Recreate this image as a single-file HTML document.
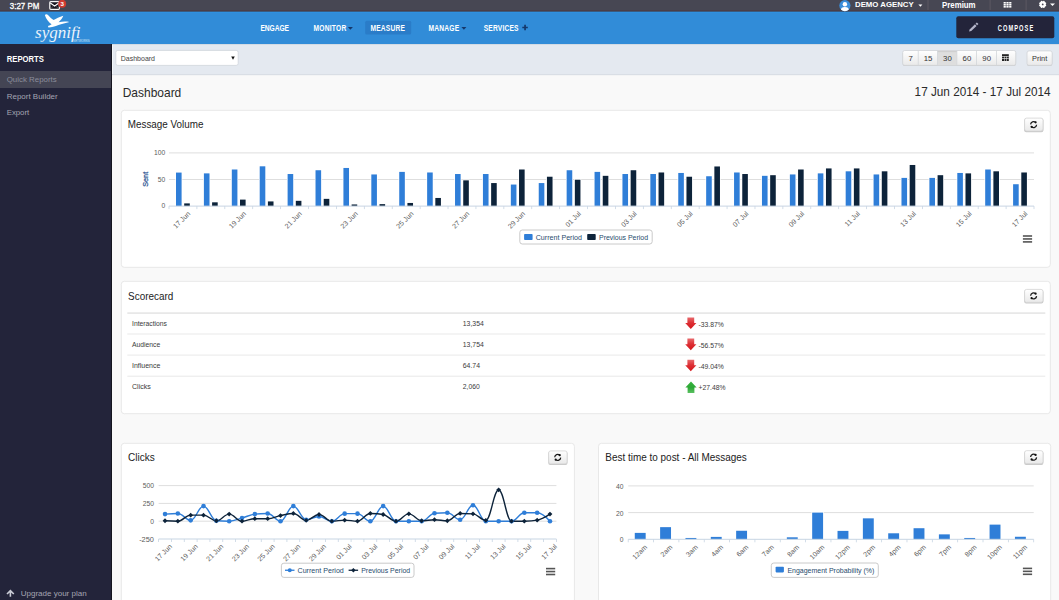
<!DOCTYPE html>
<html><head><meta charset="utf-8"><title>Dashboard</title>
<style>html,body{margin:0;padding:0;width:1059px;height:600px;overflow:hidden;background:#f9f9f9}
svg{display:block;font-family:"Liberation Sans", sans-serif}</style></head>
<body><svg width="1059" height="600" viewBox="0 0 1059 600">
<rect x="0" y="0" width="1059" height="600" fill="#f9f9f9"/>
<rect x="0" y="0" width="1059" height="11" fill="#474753"/>
<rect x="0" y="11" width="1059" height="33" fill="#318cd8"/>
<rect x="0" y="10" width="1059" height="1" fill="#4a3e47"/>
<rect x="0" y="11" width="1059" height="1" fill="#3b5a7e"/>
<rect x="0" y="12" width="1059" height="1" fill="#2f90e0"/>
<rect x="0" y="44" width="112" height="556" fill="#23243a"/>
<rect x="111" y="44" width="1" height="556" fill="#15151f"/>
<rect x="112" y="44" width="947" height="31" fill="#e4e9f0"/>
<rect x="112" y="44" width="947" height="1" fill="#d3dbe4"/>
<rect x="112" y="74" width="947" height="1.2" fill="#d9dee5"/>
<rect x="112" y="45" width="1" height="29" fill="#f3f6f9"/>
<text x="9.8" y="8.6" font-size="8.6" fill="#fff" font-weight="normal" text-anchor="start" textLength="29.5" lengthAdjust="spacingAndGlyphs" stroke="#fff" stroke-width="0.3">3:27 PM</text>
<rect x="49.8" y="1.7" width="9.6" height="7.6" rx="1" fill="#15151e" stroke="#f4f4f4" stroke-width="1.3"/>
<path d="M50.3 3.0 L54.6 6.0 L58.9 3.0" fill="none" stroke="#fff" stroke-width="1.1"/>
<path d="M50.6 8.6 L53.2 6.4 M58.6 8.6 L56.0 6.4" fill="none" stroke="#777" stroke-width="0.6"/>
<circle cx="62.2" cy="3.8" r="4.0" fill="#d03a30"/>
<text x="62.2" y="6.0" font-size="6.2" fill="#fff" font-weight="bold" text-anchor="middle" >3</text>
<defs><clipPath id="av"><circle cx="844.9" cy="5.6" r="5.6"/></clipPath></defs>
<circle cx="844.9" cy="5.6" r="5.6" fill="#3a8edb"/>
<g clip-path="url(#av)"><circle cx="844.9" cy="4.2" r="2.2" fill="#fff"/><ellipse cx="844.9" cy="10.2" rx="4" ry="3.2" fill="#fff"/></g>
<text x="855" y="7.2" font-size="7.4" fill="#fff" font-weight="bold" text-anchor="start" textLength="58.6" lengthAdjust="spacingAndGlyphs" >DEMO AGENCY</text>
<path d="M918.4 4.6 L922.4 4.6 L920.4 6.8 Z" fill="#fff"/>
<rect x="927.5" y="0" width="1" height="10" fill="#5c5862"/>
<rect x="989.6" y="0" width="1" height="10" fill="#5c5862"/>
<rect x="1025.6" y="0" width="1" height="10" fill="#5c5862"/>
<text x="942" y="7.7" font-size="8.4" fill="#fff" font-weight="bold" text-anchor="start" textLength="33.6" lengthAdjust="spacingAndGlyphs" >Premium</text>
<rect x="1003.6" y="2.0" width="2.2" height="1.6" fill="#fff"/>
<rect x="1003.6" y="4.0" width="2.2" height="1.6" fill="#fff"/>
<rect x="1003.6" y="6.0" width="2.2" height="1.6" fill="#fff"/>
<rect x="1006.4" y="2.0" width="2.2" height="1.6" fill="#fff"/>
<rect x="1006.4" y="4.0" width="2.2" height="1.6" fill="#fff"/>
<rect x="1006.4" y="6.0" width="2.2" height="1.6" fill="#fff"/>
<rect x="1009.2" y="2.0" width="2.2" height="1.6" fill="#fff"/>
<rect x="1009.2" y="4.0" width="2.2" height="1.6" fill="#fff"/>
<rect x="1009.2" y="6.0" width="2.2" height="1.6" fill="#fff"/>
<circle cx="1045.47" cy="5.55" r="0.8" fill="#fff"/>
<circle cx="1043.85" cy="7.17" r="0.8" fill="#fff"/>
<circle cx="1041.55" cy="7.17" r="0.8" fill="#fff"/>
<circle cx="1039.93" cy="5.55" r="0.8" fill="#fff"/>
<circle cx="1039.93" cy="3.25" r="0.8" fill="#fff"/>
<circle cx="1041.55" cy="1.63" r="0.8" fill="#fff"/>
<circle cx="1043.85" cy="1.63" r="0.8" fill="#fff"/>
<circle cx="1045.47" cy="3.25" r="0.8" fill="#fff"/>
<circle cx="1042.7" cy="4.4" r="3.15" fill="#fff"/><circle cx="1042.7" cy="4.4" r="0.9" fill="#474753"/>
<path d="M1050.0 3.4 L1055.0 3.4 L1052.5 5.9 Z" fill="#fff"/>
<path d="M44.9 15.2 C45.5 13.8 47 14 48.5 15.5 C50 17 51.5 19 53.6 20.0 C56 18.8 59.5 17 63.3 15.8 C62.5 18 60.5 20.5 58.6 22.2 C62 21.6 66 21.3 69.4 22.1 C66 23.4 61.5 24 58.5 25.0 C55 26.2 51.5 27.4 48.4 27.6 L48.0 26.0 C49.5 25.5 50.8 24.8 51.6 24.2 C49 22.5 46 19 44.9 15.2 Z" fill="#fff"/>
<text x="35.0" y="37.5" font-family="'Liberation Serif', serif" font-style="italic" font-size="17.4" fill="#fff" stroke="#318cd8" stroke-width="0.15" textLength="45.6" lengthAdjust="spacingAndGlyphs">sygnifi</text>
<text x="73.1" y="41.5" font-size="2.7" fill="#d6e7f7" font-weight="normal" text-anchor="start" textLength="16.7" lengthAdjust="spacingAndGlyphs" >NETWORKS</text>
<rect x="365.2" y="20.8" width="46" height="13.6" rx="1.5" fill="#2a7cc8"/>
<text x="0" y="0" transform="translate(260.4 30.8) scale(0.68 1)" font-size="9.8" fill="#fff" font-weight="bold" textLength="42.06" lengthAdjust="spacing">ENGAGE</text>
<text x="0" y="0" transform="translate(313.4 30.8) scale(0.68 1)" font-size="9.8" fill="#fff" font-weight="bold" textLength="48.38" lengthAdjust="spacing">MONITOR</text>
<text x="0" y="0" transform="translate(370.4 30.8) scale(0.68 1)" font-size="9.8" fill="#fff" font-weight="bold" textLength="50.88" lengthAdjust="spacing">MEASURE</text>
<text x="0" y="0" transform="translate(428.6 30.8) scale(0.68 1)" font-size="9.8" fill="#fff" font-weight="bold" textLength="44.85" lengthAdjust="spacing">MANAGE</text>
<text x="0" y="0" transform="translate(483.7 30.8) scale(0.68 1)" font-size="9.8" fill="#fff" font-weight="bold" textLength="51.18" lengthAdjust="spacing">SERVICES</text>
<path d="M347.9 26.9 L352.9 26.9 L350.4 29.8 Z" fill="#15386b"/>
<path d="M461.4 26.9 L466.4 26.9 L463.9 29.8 Z" fill="#15386b"/>
<path d="M522.3 27.5 H527.8 M525.05 24.8 V30.2" stroke="#15386b" stroke-width="1.7"/>
<rect x="956.3" y="16.2" width="98" height="22" rx="2" fill="#23243a"/>
<path d="M969.00 31.60 L969.64 29.38 L974.97 24.25 L976.57 25.90 L971.24 31.04 Z" fill="#b4b5c9"/>
<path d="M975.55 23.69 L976.84 22.44 L978.44 24.10 L977.14 25.35 Z" fill="#b4b5c9"/>
<text x="0" y="0" transform="translate(997.7 31.0) scale(0.66 1)" font-size="8.6" fill="#fff" font-weight="bold" textLength="53.9" lengthAdjust="spacing">COMPOSE</text>
<rect x="0" y="71" width="111" height="17" fill="#444554"/>
<text x="6.7" y="62.2" font-size="8.6" fill="#fff" font-weight="bold" text-anchor="start" textLength="37.2" lengthAdjust="spacingAndGlyphs" >REPORTS</text>
<text x="6.7" y="82.0" font-size="8" fill="#8b8d9b" font-weight="normal" text-anchor="start" textLength="50" lengthAdjust="spacingAndGlyphs" >Quick Reports</text>
<text x="6.7" y="98.6" font-size="8" fill="#a3a5b2" font-weight="normal" text-anchor="start" textLength="51" lengthAdjust="spacingAndGlyphs" >Report Builder</text>
<text x="6.7" y="115.2" font-size="8" fill="#a3a5b2" font-weight="normal" text-anchor="start" textLength="22.5" lengthAdjust="spacingAndGlyphs" >Export</text>
<path d="M10.4 596.8 V591 M7 594 L10.4 590.6 L13.8 594" fill="none" stroke="#c9cbd5" stroke-width="1.6"/>
<text x="20.7" y="596.4" font-size="8" fill="#a3a5b2" font-weight="normal" text-anchor="start" textLength="66" lengthAdjust="spacingAndGlyphs" >Upgrade your plan</text>
<rect x="115.8" y="50.4" width="122.4" height="15" rx="2" fill="#fff" stroke="#cfd4da" stroke-width="0.8"/>
<text x="120.8" y="61.0" font-size="7.2" fill="#444" font-weight="normal" text-anchor="start" textLength="34.2" lengthAdjust="spacingAndGlyphs" >Dashboard</text>
<path d="M231.2 56.4 L234.8 56.4 L233 59.8 Z" fill="#111"/>
<defs><linearGradient id="bg" x1="0" y1="0" x2="0" y2="1"><stop offset="0" stop-color="#ffffff"/><stop offset="1" stop-color="#e9e9e9"/></linearGradient></defs>
<rect x="902.7" y="51.2" width="113.1" height="14.9" rx="2" fill="#c4c4c4"/>
<rect x="902.7" y="50.5" width="113.1" height="14.9" rx="2" fill="url(#bg)" stroke="#d0d3d7" stroke-width="0.8"/>
<rect x="937.6" y="50.9" width="19.3" height="14.2" fill="#dedede"/>
<rect x="937.6" y="50.9" width="19.3" height="1.2" fill="#cfcfcf"/>
<rect x="917.8000000000001" y="50.5" width="0.8" height="14.9" fill="#d3d6da"/>
<rect x="937.2" y="50.5" width="0.8" height="14.9" fill="#d3d6da"/>
<rect x="956.5" y="50.5" width="0.8" height="14.9" fill="#d3d6da"/>
<rect x="976.2" y="50.5" width="0.8" height="14.9" fill="#d3d6da"/>
<rect x="996.0" y="50.5" width="0.8" height="14.9" fill="#d3d6da"/>
<text x="910.6500000000001" y="60.8" font-size="7.8" fill="#333" font-weight="normal" text-anchor="middle" >7</text>
<text x="928.1000000000001" y="60.8" font-size="7.8" fill="#333" font-weight="normal" text-anchor="middle" >15</text>
<text x="947.45" y="60.8" font-size="7.8" fill="#333" font-weight="normal" text-anchor="middle" >30</text>
<text x="966.95" y="60.8" font-size="7.8" fill="#333" font-weight="normal" text-anchor="middle" >60</text>
<text x="986.7" y="60.8" font-size="7.8" fill="#333" font-weight="normal" text-anchor="middle" >90</text>
<rect x="1002" y="54.2" width="6.8" height="6.8" fill="#222"/>
<rect x="1002" y="56.2" width="6.8" height="0.6" fill="#f3f3f3"/><rect x="1002" y="58.4" width="6.8" height="0.6" fill="#f3f3f3"/>
<rect x="1004.2" y="56.2" width="0.5" height="4.8" fill="#f3f3f3"/><rect x="1006.3" y="56.2" width="0.5" height="4.8" fill="#f3f3f3"/>
<rect x="1027" y="51.6" width="25.2" height="14.5" rx="2" fill="#c4c4c4"/>
<rect x="1027" y="50.9" width="25.2" height="14.5" rx="2" fill="url(#bg)" stroke="#d0d3d7" stroke-width="0.8"/>
<text x="1039.6" y="60.8" font-size="7.6" fill="#333" font-weight="normal" text-anchor="middle" textLength="15.2" lengthAdjust="spacingAndGlyphs" >Print</text>
<text x="122.7" y="97.0" font-size="13.6" fill="#2a2a2a" font-weight="normal" text-anchor="start" textLength="58.6" lengthAdjust="spacingAndGlyphs" >Dashboard</text>
<text x="1050.6" y="95.6" font-size="13.2" fill="#2a2a2a" font-weight="normal" text-anchor="end" textLength="136" lengthAdjust="spacingAndGlyphs" >17 Jun 2014 - 17 Jul 2014</text>
<rect x="121.3" y="110.3" width="929" height="157" rx="3" fill="#fff" stroke="#e8e8e8" stroke-width="1"/>
<rect x="121.3" y="281.3" width="929" height="132.4" rx="3" fill="#fff" stroke="#e8e8e8" stroke-width="1"/>
<rect x="121.3" y="443.3" width="453.1" height="169" rx="3" fill="#fff" stroke="#e8e8e8" stroke-width="1"/>
<rect x="598.5" y="443.3" width="452.2" height="169" rx="3" fill="#fff" stroke="#e8e8e8" stroke-width="1"/>
<text x="127.8" y="128.4" font-size="10.8" fill="#222" font-weight="normal" text-anchor="start" textLength="75.6" lengthAdjust="spacingAndGlyphs" >Message Volume</text>
<text x="128.1" y="300.1" font-size="10.8" fill="#222" font-weight="normal" text-anchor="start" textLength="45.2" lengthAdjust="spacingAndGlyphs" >Scorecard</text>
<text x="128" y="460.8" font-size="10.8" fill="#222" font-weight="normal" text-anchor="start" textLength="26.7" lengthAdjust="spacingAndGlyphs" >Clicks</text>
<text x="605.3" y="461.2" font-size="10.8" fill="#222" font-weight="normal" text-anchor="start" textLength="141.5" lengthAdjust="spacingAndGlyphs" >Best time to post - All Messages</text>
<rect x="1024.2" y="118.60000000000001" width="19.2" height="13.7" rx="2" fill="#c9c9c9"/>
<rect x="1024.6000000000001" y="118.10000000000001" width="18.4" height="13.0" rx="2" fill="url(#bg)" stroke="#d3d3d3" stroke-width="0.8"/>
<path d="M1030.61 124.39 A3.0 3.0 0 0 1 1035.61 122.37" fill="none" stroke="#1a1a1a" stroke-width="1.25"/>
<circle cx="1035.61" cy="122.37" r="1.1" fill="#111"/>
<path d="M1036.59 124.81 A3.0 3.0 0 0 1 1031.59 126.83" fill="none" stroke="#1a1a1a" stroke-width="1.25"/>
<circle cx="1031.59" cy="126.83" r="1.1" fill="#111"/>
<rect x="1024.2" y="289.9" width="19.2" height="13.7" rx="2" fill="#c9c9c9"/>
<rect x="1024.6000000000001" y="289.4" width="18.4" height="13.0" rx="2" fill="url(#bg)" stroke="#d3d3d3" stroke-width="0.8"/>
<path d="M1030.61 295.69 A3.0 3.0 0 0 1 1035.61 293.67" fill="none" stroke="#1a1a1a" stroke-width="1.25"/>
<circle cx="1035.61" cy="293.67" r="1.1" fill="#111"/>
<path d="M1036.59 296.11 A3.0 3.0 0 0 1 1031.59 298.13" fill="none" stroke="#1a1a1a" stroke-width="1.25"/>
<circle cx="1031.59" cy="298.13" r="1.1" fill="#111"/>
<rect x="548.3" y="451.4" width="19.2" height="13.7" rx="2" fill="#c9c9c9"/>
<rect x="548.6999999999999" y="450.9" width="18.4" height="13.0" rx="2" fill="url(#bg)" stroke="#d3d3d3" stroke-width="0.8"/>
<path d="M554.71 457.19 A3.0 3.0 0 0 1 559.71 455.17" fill="none" stroke="#1a1a1a" stroke-width="1.25"/>
<circle cx="559.71" cy="455.17" r="1.1" fill="#111"/>
<path d="M560.69 457.61 A3.0 3.0 0 0 1 555.69 459.63" fill="none" stroke="#1a1a1a" stroke-width="1.25"/>
<circle cx="555.69" cy="459.63" r="1.1" fill="#111"/>
<rect x="1024.2" y="451.2" width="19.2" height="13.7" rx="2" fill="#c9c9c9"/>
<rect x="1024.6000000000001" y="450.7" width="18.4" height="13.0" rx="2" fill="url(#bg)" stroke="#d3d3d3" stroke-width="0.8"/>
<path d="M1030.61 456.99 A3.0 3.0 0 0 1 1035.61 454.97" fill="none" stroke="#1a1a1a" stroke-width="1.25"/>
<circle cx="1035.61" cy="454.97" r="1.1" fill="#111"/>
<path d="M1036.59 457.41 A3.0 3.0 0 0 1 1031.59 459.43" fill="none" stroke="#1a1a1a" stroke-width="1.25"/>
<circle cx="1031.59" cy="459.43" r="1.1" fill="#111"/>
<rect x="169.0" y="152.40" width="865.0" height="1" fill="#dedede"/>
<rect x="169.0" y="179.00" width="865.0" height="1" fill="#dedede"/>
<text x="165.20" y="155.20" font-size="6.4" fill="#5a5a5a" font-weight="normal" text-anchor="end" textLength="11.25" lengthAdjust="spacingAndGlyphs" >100</text>
<text x="165.20" y="181.80" font-size="6.4" fill="#5a5a5a" font-weight="normal" text-anchor="end" textLength="7.5" lengthAdjust="spacingAndGlyphs" >50</text>
<text x="165.20" y="208.40" font-size="6.4" fill="#5a5a5a" font-weight="normal" text-anchor="end" textLength="3.75" lengthAdjust="spacingAndGlyphs" >0</text>
<text x="0" y="0" font-size="7.6" fill="#2a5391" stroke="#2a5391" stroke-width="0.25" text-anchor="middle" textLength="15" lengthAdjust="spacingAndGlyphs" transform="translate(147.9 179.3) rotate(-90)">Sent</text>
<rect x="176.00" y="172.58" width="5.6" height="33.52" fill="#2f7ed8" stroke="#fff" stroke-width="1.4" paint-order="stroke"/>
<rect x="184.20" y="203.39" width="5.6" height="2.71" fill="#0d233a" stroke="#fff" stroke-width="1.4" paint-order="stroke"/>
<rect x="203.90" y="173.38" width="5.6" height="32.72" fill="#2f7ed8" stroke="#fff" stroke-width="1.4" paint-order="stroke"/>
<rect x="212.10" y="202.32" width="5.6" height="3.78" fill="#0d233a" stroke="#fff" stroke-width="1.4" paint-order="stroke"/>
<rect x="231.81" y="169.50" width="5.6" height="36.60" fill="#2f7ed8" stroke="#fff" stroke-width="1.4" paint-order="stroke"/>
<rect x="240.01" y="199.61" width="5.6" height="6.49" fill="#0d233a" stroke="#fff" stroke-width="1.4" paint-order="stroke"/>
<rect x="259.71" y="166.31" width="5.6" height="39.79" fill="#2f7ed8" stroke="#fff" stroke-width="1.4" paint-order="stroke"/>
<rect x="267.91" y="201.42" width="5.6" height="4.68" fill="#0d233a" stroke="#fff" stroke-width="1.4" paint-order="stroke"/>
<rect x="287.61" y="174.02" width="5.6" height="32.08" fill="#2f7ed8" stroke="#fff" stroke-width="1.4" paint-order="stroke"/>
<rect x="295.81" y="200.83" width="5.6" height="5.27" fill="#0d233a" stroke="#fff" stroke-width="1.4" paint-order="stroke"/>
<rect x="315.52" y="170.24" width="5.6" height="35.86" fill="#2f7ed8" stroke="#fff" stroke-width="1.4" paint-order="stroke"/>
<rect x="323.72" y="198.86" width="5.6" height="7.24" fill="#0d233a" stroke="#fff" stroke-width="1.4" paint-order="stroke"/>
<rect x="343.42" y="167.96" width="5.6" height="38.14" fill="#2f7ed8" stroke="#fff" stroke-width="1.4" paint-order="stroke"/>
<rect x="351.62" y="204.45" width="5.6" height="1.65" fill="#0d233a" stroke="#fff" stroke-width="1.4" paint-order="stroke"/>
<rect x="371.32" y="174.45" width="5.6" height="31.65" fill="#2f7ed8" stroke="#fff" stroke-width="1.4" paint-order="stroke"/>
<rect x="379.52" y="204.13" width="5.6" height="1.97" fill="#0d233a" stroke="#fff" stroke-width="1.4" paint-order="stroke"/>
<rect x="399.23" y="171.89" width="5.6" height="34.21" fill="#2f7ed8" stroke="#fff" stroke-width="1.4" paint-order="stroke"/>
<rect x="407.43" y="202.96" width="5.6" height="3.14" fill="#0d233a" stroke="#fff" stroke-width="1.4" paint-order="stroke"/>
<rect x="427.13" y="172.48" width="5.6" height="33.62" fill="#2f7ed8" stroke="#fff" stroke-width="1.4" paint-order="stroke"/>
<rect x="435.33" y="197.96" width="5.6" height="8.14" fill="#0d233a" stroke="#fff" stroke-width="1.4" paint-order="stroke"/>
<rect x="455.03" y="174.02" width="5.6" height="32.08" fill="#2f7ed8" stroke="#fff" stroke-width="1.4" paint-order="stroke"/>
<rect x="463.23" y="180.35" width="5.6" height="25.75" fill="#0d233a" stroke="#fff" stroke-width="1.4" paint-order="stroke"/>
<rect x="482.94" y="174.02" width="5.6" height="32.08" fill="#2f7ed8" stroke="#fff" stroke-width="1.4" paint-order="stroke"/>
<rect x="491.14" y="183.06" width="5.6" height="23.04" fill="#0d233a" stroke="#fff" stroke-width="1.4" paint-order="stroke"/>
<rect x="510.84" y="184.55" width="5.6" height="21.55" fill="#2f7ed8" stroke="#fff" stroke-width="1.4" paint-order="stroke"/>
<rect x="519.04" y="169.50" width="5.6" height="36.60" fill="#0d233a" stroke="#fff" stroke-width="1.4" paint-order="stroke"/>
<rect x="538.74" y="183.06" width="5.6" height="23.04" fill="#2f7ed8" stroke="#fff" stroke-width="1.4" paint-order="stroke"/>
<rect x="546.94" y="176.73" width="5.6" height="29.37" fill="#0d233a" stroke="#fff" stroke-width="1.4" paint-order="stroke"/>
<rect x="566.65" y="170.24" width="5.6" height="35.86" fill="#2f7ed8" stroke="#fff" stroke-width="1.4" paint-order="stroke"/>
<rect x="574.85" y="179.71" width="5.6" height="26.39" fill="#0d233a" stroke="#fff" stroke-width="1.4" paint-order="stroke"/>
<rect x="594.55" y="171.89" width="5.6" height="34.21" fill="#2f7ed8" stroke="#fff" stroke-width="1.4" paint-order="stroke"/>
<rect x="602.75" y="175.83" width="5.6" height="30.27" fill="#0d233a" stroke="#fff" stroke-width="1.4" paint-order="stroke"/>
<rect x="622.45" y="174.02" width="5.6" height="32.08" fill="#2f7ed8" stroke="#fff" stroke-width="1.4" paint-order="stroke"/>
<rect x="630.65" y="170.24" width="5.6" height="35.86" fill="#0d233a" stroke="#fff" stroke-width="1.4" paint-order="stroke"/>
<rect x="650.35" y="174.02" width="5.6" height="32.08" fill="#2f7ed8" stroke="#fff" stroke-width="1.4" paint-order="stroke"/>
<rect x="658.55" y="172.48" width="5.6" height="33.62" fill="#0d233a" stroke="#fff" stroke-width="1.4" paint-order="stroke"/>
<rect x="678.26" y="172.96" width="5.6" height="33.14" fill="#2f7ed8" stroke="#fff" stroke-width="1.4" paint-order="stroke"/>
<rect x="686.46" y="176.73" width="5.6" height="29.37" fill="#0d233a" stroke="#fff" stroke-width="1.4" paint-order="stroke"/>
<rect x="706.16" y="176.25" width="5.6" height="29.85" fill="#2f7ed8" stroke="#fff" stroke-width="1.4" paint-order="stroke"/>
<rect x="714.36" y="166.47" width="5.6" height="39.63" fill="#0d233a" stroke="#fff" stroke-width="1.4" paint-order="stroke"/>
<rect x="734.06" y="172.48" width="5.6" height="33.62" fill="#2f7ed8" stroke="#fff" stroke-width="1.4" paint-order="stroke"/>
<rect x="742.26" y="174.02" width="5.6" height="32.08" fill="#0d233a" stroke="#fff" stroke-width="1.4" paint-order="stroke"/>
<rect x="761.97" y="175.83" width="5.6" height="30.27" fill="#2f7ed8" stroke="#fff" stroke-width="1.4" paint-order="stroke"/>
<rect x="770.17" y="175.19" width="5.6" height="30.91" fill="#0d233a" stroke="#fff" stroke-width="1.4" paint-order="stroke"/>
<rect x="789.87" y="174.45" width="5.6" height="31.65" fill="#2f7ed8" stroke="#fff" stroke-width="1.4" paint-order="stroke"/>
<rect x="798.07" y="169.50" width="5.6" height="36.60" fill="#0d233a" stroke="#fff" stroke-width="1.4" paint-order="stroke"/>
<rect x="817.77" y="173.38" width="5.6" height="32.72" fill="#2f7ed8" stroke="#fff" stroke-width="1.4" paint-order="stroke"/>
<rect x="825.97" y="168.43" width="5.6" height="37.67" fill="#0d233a" stroke="#fff" stroke-width="1.4" paint-order="stroke"/>
<rect x="845.68" y="171.31" width="5.6" height="34.79" fill="#2f7ed8" stroke="#fff" stroke-width="1.4" paint-order="stroke"/>
<rect x="853.88" y="168.43" width="5.6" height="37.67" fill="#0d233a" stroke="#fff" stroke-width="1.4" paint-order="stroke"/>
<rect x="873.58" y="174.45" width="5.6" height="31.65" fill="#2f7ed8" stroke="#fff" stroke-width="1.4" paint-order="stroke"/>
<rect x="881.78" y="171.31" width="5.6" height="34.79" fill="#0d233a" stroke="#fff" stroke-width="1.4" paint-order="stroke"/>
<rect x="901.48" y="177.90" width="5.6" height="28.20" fill="#2f7ed8" stroke="#fff" stroke-width="1.4" paint-order="stroke"/>
<rect x="909.68" y="164.98" width="5.6" height="41.12" fill="#0d233a" stroke="#fff" stroke-width="1.4" paint-order="stroke"/>
<rect x="929.39" y="177.90" width="5.6" height="28.20" fill="#2f7ed8" stroke="#fff" stroke-width="1.4" paint-order="stroke"/>
<rect x="937.59" y="175.19" width="5.6" height="30.91" fill="#0d233a" stroke="#fff" stroke-width="1.4" paint-order="stroke"/>
<rect x="957.29" y="172.96" width="5.6" height="33.14" fill="#2f7ed8" stroke="#fff" stroke-width="1.4" paint-order="stroke"/>
<rect x="965.49" y="173.38" width="5.6" height="32.72" fill="#0d233a" stroke="#fff" stroke-width="1.4" paint-order="stroke"/>
<rect x="985.19" y="169.50" width="5.6" height="36.60" fill="#2f7ed8" stroke="#fff" stroke-width="1.4" paint-order="stroke"/>
<rect x="993.39" y="171.31" width="5.6" height="34.79" fill="#0d233a" stroke="#fff" stroke-width="1.4" paint-order="stroke"/>
<rect x="1013.10" y="184.23" width="5.6" height="21.87" fill="#2f7ed8" stroke="#fff" stroke-width="1.4" paint-order="stroke"/>
<rect x="1021.30" y="172.48" width="5.6" height="33.62" fill="#0d233a" stroke="#fff" stroke-width="1.4" paint-order="stroke"/>
<rect x="169.0" y="205.60" width="865.0" height="1" fill="#c8d5e3"/>
<rect x="168.60" y="206.10" width="0.8" height="3" fill="#c8d5e3"/>
<rect x="196.50" y="206.10" width="0.8" height="3" fill="#c8d5e3"/>
<rect x="224.41" y="206.10" width="0.8" height="3" fill="#c8d5e3"/>
<rect x="252.31" y="206.10" width="0.8" height="3" fill="#c8d5e3"/>
<rect x="280.21" y="206.10" width="0.8" height="3" fill="#c8d5e3"/>
<rect x="308.12" y="206.10" width="0.8" height="3" fill="#c8d5e3"/>
<rect x="336.02" y="206.10" width="0.8" height="3" fill="#c8d5e3"/>
<rect x="363.92" y="206.10" width="0.8" height="3" fill="#c8d5e3"/>
<rect x="391.83" y="206.10" width="0.8" height="3" fill="#c8d5e3"/>
<rect x="419.73" y="206.10" width="0.8" height="3" fill="#c8d5e3"/>
<rect x="447.63" y="206.10" width="0.8" height="3" fill="#c8d5e3"/>
<rect x="475.54" y="206.10" width="0.8" height="3" fill="#c8d5e3"/>
<rect x="503.44" y="206.10" width="0.8" height="3" fill="#c8d5e3"/>
<rect x="531.34" y="206.10" width="0.8" height="3" fill="#c8d5e3"/>
<rect x="559.25" y="206.10" width="0.8" height="3" fill="#c8d5e3"/>
<rect x="587.15" y="206.10" width="0.8" height="3" fill="#c8d5e3"/>
<rect x="615.05" y="206.10" width="0.8" height="3" fill="#c8d5e3"/>
<rect x="642.95" y="206.10" width="0.8" height="3" fill="#c8d5e3"/>
<rect x="670.86" y="206.10" width="0.8" height="3" fill="#c8d5e3"/>
<rect x="698.76" y="206.10" width="0.8" height="3" fill="#c8d5e3"/>
<rect x="726.66" y="206.10" width="0.8" height="3" fill="#c8d5e3"/>
<rect x="754.57" y="206.10" width="0.8" height="3" fill="#c8d5e3"/>
<rect x="782.47" y="206.10" width="0.8" height="3" fill="#c8d5e3"/>
<rect x="810.37" y="206.10" width="0.8" height="3" fill="#c8d5e3"/>
<rect x="838.28" y="206.10" width="0.8" height="3" fill="#c8d5e3"/>
<rect x="866.18" y="206.10" width="0.8" height="3" fill="#c8d5e3"/>
<rect x="894.08" y="206.10" width="0.8" height="3" fill="#c8d5e3"/>
<rect x="921.99" y="206.10" width="0.8" height="3" fill="#c8d5e3"/>
<rect x="949.89" y="206.10" width="0.8" height="3" fill="#c8d5e3"/>
<rect x="977.79" y="206.10" width="0.8" height="3" fill="#c8d5e3"/>
<rect x="1005.70" y="206.10" width="0.8" height="3" fill="#c8d5e3"/>
<rect x="1033.60" y="206.10" width="0.8" height="3" fill="#c8d5e3"/>
<text x="0" y="0" font-size="7.0" fill="#5a5a5a" text-anchor="end" transform="translate(190.75 214.20) rotate(-45)">17 Jun</text>
<text x="0" y="0" font-size="7.0" fill="#5a5a5a" text-anchor="end" transform="translate(246.56 214.20) rotate(-45)">19 Jun</text>
<text x="0" y="0" font-size="7.0" fill="#5a5a5a" text-anchor="end" transform="translate(302.36 214.20) rotate(-45)">21 Jun</text>
<text x="0" y="0" font-size="7.0" fill="#5a5a5a" text-anchor="end" transform="translate(358.17 214.20) rotate(-45)">23 Jun</text>
<text x="0" y="0" font-size="7.0" fill="#5a5a5a" text-anchor="end" transform="translate(413.98 214.20) rotate(-45)">25 Jun</text>
<text x="0" y="0" font-size="7.0" fill="#5a5a5a" text-anchor="end" transform="translate(469.78 214.20) rotate(-45)">27 Jun</text>
<text x="0" y="0" font-size="7.0" fill="#5a5a5a" text-anchor="end" transform="translate(525.59 214.20) rotate(-45)">29 Jun</text>
<text x="0" y="0" font-size="7.0" fill="#5a5a5a" text-anchor="end" transform="translate(581.40 214.20) rotate(-45)">01 Jul</text>
<text x="0" y="0" font-size="7.0" fill="#5a5a5a" text-anchor="end" transform="translate(637.20 214.20) rotate(-45)">03 Jul</text>
<text x="0" y="0" font-size="7.0" fill="#5a5a5a" text-anchor="end" transform="translate(693.01 214.20) rotate(-45)">05 Jul</text>
<text x="0" y="0" font-size="7.0" fill="#5a5a5a" text-anchor="end" transform="translate(748.82 214.20) rotate(-45)">07 Jul</text>
<text x="0" y="0" font-size="7.0" fill="#5a5a5a" text-anchor="end" transform="translate(804.62 214.20) rotate(-45)">09 Jul</text>
<text x="0" y="0" font-size="7.0" fill="#5a5a5a" text-anchor="end" transform="translate(860.43 214.20) rotate(-45)">11 Jul</text>
<text x="0" y="0" font-size="7.0" fill="#5a5a5a" text-anchor="end" transform="translate(916.24 214.20) rotate(-45)">13 Jul</text>
<text x="0" y="0" font-size="7.0" fill="#5a5a5a" text-anchor="end" transform="translate(972.04 214.20) rotate(-45)">15 Jul</text>
<text x="0" y="0" font-size="7.0" fill="#5a5a5a" text-anchor="end" transform="translate(1027.85 214.20) rotate(-45)">17 Jul</text>
<rect x="519.8" y="230" width="132.4" height="14" rx="2.5" fill="#fff" stroke="#bdbdbd" stroke-width="0.8"/>
<rect x="524.1" y="234" width="8.5" height="6" rx="0.8" fill="#2f7ed8"/>
<text x="535.70" y="240.20" font-size="7.8" fill="#274b6d" font-weight="normal" text-anchor="start" textLength="46.3" lengthAdjust="spacingAndGlyphs" >Current Period</text>
<rect x="587.2" y="234" width="8.5" height="6" rx="0.8" fill="#0d233a"/>
<text x="599.00" y="240.20" font-size="7.8" fill="#274b6d" font-weight="normal" text-anchor="start" textLength="49" lengthAdjust="spacingAndGlyphs" >Previous Period</text>
<rect x="1022.9" y="235.2" width="9.2" height="1.6" fill="#555"/>
<rect x="1022.9" y="238.14999999999998" width="9.2" height="1.6" fill="#555"/>
<rect x="1022.9" y="241.1" width="9.2" height="1.6" fill="#555"/>
<defs><linearGradient id="rg" x1="0" y1="0" x2="0" y2="1"><stop offset="0" stop-color="#e86a6d"/><stop offset="0.45" stop-color="#dd3035"/><stop offset="1" stop-color="#d4161c"/></linearGradient><linearGradient id="gg" x1="0" y1="0" x2="0" y2="1"><stop offset="0" stop-color="#36b33d"/><stop offset="0.55" stop-color="#2ea836"/><stop offset="1" stop-color="#5cc163"/></linearGradient></defs>
<rect x="127.3" y="312.3" width="918" height="1.6" fill="#e6e6e6"/>
<rect x="127.3" y="333.5" width="918" height="1" fill="#e9e9e9"/>
<rect x="127.3" y="354.6" width="918" height="1" fill="#e9e9e9"/>
<rect x="127.3" y="375.7" width="918" height="1" fill="#e9e9e9"/>
<text x="132.00" y="325.60" font-size="7" fill="#3a3a3a" font-weight="normal" text-anchor="start" textLength="35" lengthAdjust="spacingAndGlyphs" >Interactions</text>
<text x="462.80" y="325.60" font-size="7" fill="#3a3a3a" font-weight="normal" text-anchor="start" textLength="21" lengthAdjust="spacingAndGlyphs" >13,354</text>
<text x="698.50" y="326.90" font-size="7" fill="#3a3a3a" font-weight="normal" text-anchor="start" textLength="25.3" lengthAdjust="spacingAndGlyphs" >-33.87%</text>
<path d="M687.4 317.5 H694.2 V323.1 H696.4 L690.8 329.1 L685.2 323.1 H687.4 Z" fill="url(#rg)"/>
<text x="132.00" y="346.70" font-size="7" fill="#3a3a3a" font-weight="normal" text-anchor="start" textLength="28.3" lengthAdjust="spacingAndGlyphs" >Audience</text>
<text x="462.80" y="346.70" font-size="7" fill="#3a3a3a" font-weight="normal" text-anchor="start" textLength="21" lengthAdjust="spacingAndGlyphs" >13,754</text>
<text x="698.50" y="348.00" font-size="7" fill="#3a3a3a" font-weight="normal" text-anchor="start" textLength="25.3" lengthAdjust="spacingAndGlyphs" >-56.57%</text>
<path d="M687.4 338.6 H694.2 V344.20000000000005 H696.4 L690.8 350.20000000000005 L685.2 344.20000000000005 H687.4 Z" fill="url(#rg)"/>
<text x="132.00" y="367.80" font-size="7" fill="#3a3a3a" font-weight="normal" text-anchor="start" textLength="28.3" lengthAdjust="spacingAndGlyphs" >Influence</text>
<text x="462.80" y="367.80" font-size="7" fill="#3a3a3a" font-weight="normal" text-anchor="start" textLength="17.2" lengthAdjust="spacingAndGlyphs" >64.74</text>
<text x="698.50" y="369.10" font-size="7" fill="#3a3a3a" font-weight="normal" text-anchor="start" textLength="25.3" lengthAdjust="spacingAndGlyphs" >-49.04%</text>
<path d="M687.4 359.7 H694.2 V365.3 H696.4 L690.8 371.3 L685.2 365.3 H687.4 Z" fill="url(#rg)"/>
<text x="132.00" y="388.90" font-size="7" fill="#3a3a3a" font-weight="normal" text-anchor="start" textLength="18.8" lengthAdjust="spacingAndGlyphs" >Clicks</text>
<text x="462.80" y="388.90" font-size="7" fill="#3a3a3a" font-weight="normal" text-anchor="start" textLength="17" lengthAdjust="spacingAndGlyphs" >2,060</text>
<text x="698.50" y="390.20" font-size="7" fill="#3a3a3a" font-weight="normal" text-anchor="start" textLength="27" lengthAdjust="spacingAndGlyphs" >+27.48%</text>
<path d="M687.6 393.0 H694.4 V387.40000000000003 H696.6 L691 381.40000000000003 L685.4 387.40000000000003 H687.6 Z" fill="url(#gg)"/>
<rect x="158.6" y="485.10" width="397.79999999999995" height="1" fill="#dedede"/>
<rect x="158.6" y="502.90" width="397.79999999999995" height="1" fill="#dedede"/>
<rect x="158.6" y="520.70" width="397.79999999999995" height="1" fill="#dedede"/>
<rect x="158.6" y="538.50" width="397.79999999999995" height="1" fill="#c8d5e3"/>
<rect x="158.20" y="539.00" width="0.8" height="3" fill="#c8d5e3"/>
<rect x="171.03" y="539.00" width="0.8" height="3" fill="#c8d5e3"/>
<rect x="183.86" y="539.00" width="0.8" height="3" fill="#c8d5e3"/>
<rect x="196.70" y="539.00" width="0.8" height="3" fill="#c8d5e3"/>
<rect x="209.53" y="539.00" width="0.8" height="3" fill="#c8d5e3"/>
<rect x="222.36" y="539.00" width="0.8" height="3" fill="#c8d5e3"/>
<rect x="235.19" y="539.00" width="0.8" height="3" fill="#c8d5e3"/>
<rect x="248.03" y="539.00" width="0.8" height="3" fill="#c8d5e3"/>
<rect x="260.86" y="539.00" width="0.8" height="3" fill="#c8d5e3"/>
<rect x="273.69" y="539.00" width="0.8" height="3" fill="#c8d5e3"/>
<rect x="286.52" y="539.00" width="0.8" height="3" fill="#c8d5e3"/>
<rect x="299.35" y="539.00" width="0.8" height="3" fill="#c8d5e3"/>
<rect x="312.19" y="539.00" width="0.8" height="3" fill="#c8d5e3"/>
<rect x="325.02" y="539.00" width="0.8" height="3" fill="#c8d5e3"/>
<rect x="337.85" y="539.00" width="0.8" height="3" fill="#c8d5e3"/>
<rect x="350.68" y="539.00" width="0.8" height="3" fill="#c8d5e3"/>
<rect x="363.52" y="539.00" width="0.8" height="3" fill="#c8d5e3"/>
<rect x="376.35" y="539.00" width="0.8" height="3" fill="#c8d5e3"/>
<rect x="389.18" y="539.00" width="0.8" height="3" fill="#c8d5e3"/>
<rect x="402.01" y="539.00" width="0.8" height="3" fill="#c8d5e3"/>
<rect x="414.85" y="539.00" width="0.8" height="3" fill="#c8d5e3"/>
<rect x="427.68" y="539.00" width="0.8" height="3" fill="#c8d5e3"/>
<rect x="440.51" y="539.00" width="0.8" height="3" fill="#c8d5e3"/>
<rect x="453.34" y="539.00" width="0.8" height="3" fill="#c8d5e3"/>
<rect x="466.17" y="539.00" width="0.8" height="3" fill="#c8d5e3"/>
<rect x="479.01" y="539.00" width="0.8" height="3" fill="#c8d5e3"/>
<rect x="491.84" y="539.00" width="0.8" height="3" fill="#c8d5e3"/>
<rect x="504.67" y="539.00" width="0.8" height="3" fill="#c8d5e3"/>
<rect x="517.50" y="539.00" width="0.8" height="3" fill="#c8d5e3"/>
<rect x="530.34" y="539.00" width="0.8" height="3" fill="#c8d5e3"/>
<rect x="543.17" y="539.00" width="0.8" height="3" fill="#c8d5e3"/>
<rect x="556.00" y="539.00" width="0.8" height="3" fill="#c8d5e3"/>
<text x="154.00" y="488.40" font-size="6.4" fill="#5a5a5a" font-weight="normal" text-anchor="end" textLength="11.25" lengthAdjust="spacingAndGlyphs" >500</text>
<text x="154.00" y="506.20" font-size="6.4" fill="#5a5a5a" font-weight="normal" text-anchor="end" textLength="11.25" lengthAdjust="spacingAndGlyphs" >250</text>
<text x="154.00" y="524.00" font-size="6.4" fill="#5a5a5a" font-weight="normal" text-anchor="end" textLength="3.75" lengthAdjust="spacingAndGlyphs" >0</text>
<text x="154.00" y="541.80" font-size="6.4" fill="#5a5a5a" font-weight="normal" text-anchor="end" textLength="14.85" lengthAdjust="spacingAndGlyphs" >-250</text>
<path d="M165.02 514.08 C165.02 514.08 172.72 513.44 177.85 513.44 C182.98 513.44 185.55 520.35 190.68 520.35 C195.81 520.35 198.38 506.11 203.51 506.11 C208.65 506.11 211.21 520.35 216.35 520.77 C221.48 521.20 224.04 521.20 229.18 521.20 C234.31 521.20 236.88 519.49 242.01 518.07 C247.14 516.64 249.71 514.72 254.84 514.08 C259.97 513.44 262.54 513.44 267.67 513.44 C272.81 513.44 275.37 521.20 280.51 521.20 C285.64 521.20 288.21 506.11 293.34 506.11 C298.47 506.11 301.04 519.70 306.17 519.70 C311.30 519.70 313.87 516.57 319.00 516.57 C324.14 516.57 326.70 521.20 331.84 521.20 C336.97 521.20 339.53 513.65 344.67 513.65 C349.80 513.65 352.37 513.65 357.50 513.65 C362.63 513.65 365.20 521.20 370.33 521.20 C375.47 521.20 378.03 506.11 383.16 506.11 C388.30 506.11 390.86 521.20 396.00 521.20 C401.13 521.20 403.70 521.20 408.83 521.20 C413.96 521.20 416.53 521.20 421.66 521.20 C426.79 521.20 429.36 513.65 434.49 513.23 C439.63 512.80 442.19 512.80 447.33 512.80 C452.46 512.80 455.03 519.70 460.16 519.70 C465.29 519.70 467.86 505.25 472.99 505.25 C478.12 505.25 480.69 521.20 485.82 521.20 C490.96 521.20 493.52 521.20 498.65 521.20 C503.79 521.20 506.35 521.20 511.49 521.20 C516.62 521.20 519.19 512.80 524.32 512.80 C529.45 512.80 532.02 512.80 537.15 512.80 C542.28 512.80 549.98 521.20 549.98 521.20" fill="none" stroke="#2f7ed8" stroke-width="1.4"/>
<path d="M165.02 520.77 C165.02 520.77 172.72 521.20 177.85 521.20 C182.98 521.20 185.55 515.15 190.68 515.15 C195.81 515.15 198.38 515.15 203.51 515.15 C208.65 515.15 211.21 520.77 216.35 520.77 C221.48 520.77 224.04 514.08 229.18 514.08 C234.31 514.08 236.88 521.20 242.01 521.20 C247.14 521.20 249.71 518.71 254.84 518.71 C259.97 518.71 262.54 518.71 267.67 518.71 C272.81 518.71 275.37 516.63 280.51 515.58 C285.64 514.52 288.21 513.44 293.34 513.44 C298.47 513.44 301.04 520.35 306.17 520.35 C311.30 520.35 313.87 514.51 319.00 514.51 C324.14 514.51 326.70 521.20 331.84 521.20 C336.97 521.20 339.53 520.13 344.67 520.13 C349.80 520.13 352.37 521.20 357.50 521.20 C362.63 521.20 365.20 513.44 370.33 513.44 C375.47 513.44 378.03 513.44 383.16 514.51 C388.30 515.58 390.86 521.20 396.00 521.20 C401.13 521.20 403.70 513.87 408.83 513.87 C413.96 513.87 416.53 520.77 421.66 520.77 C426.79 520.77 429.36 519.70 434.49 519.70 C439.63 519.70 442.19 520.77 447.33 520.77 C452.46 520.77 455.03 513.44 460.16 513.44 C465.29 513.44 467.86 513.44 472.99 513.87 C478.12 514.29 480.69 520.35 485.82 520.35 C490.96 520.35 493.52 489.87 498.65 489.87 C503.79 489.87 506.35 521.20 511.49 521.20 C516.62 521.20 519.19 521.20 524.32 521.20 C529.45 521.20 532.02 521.20 537.15 520.13 C542.28 519.06 549.98 514.08 549.98 514.08" fill="none" stroke="#0d233a" stroke-width="1.4"/>
<circle cx="165.02" cy="514.08" r="2.3" fill="#2f7ed8"/>
<circle cx="177.85" cy="513.44" r="2.3" fill="#2f7ed8"/>
<circle cx="190.68" cy="520.35" r="2.3" fill="#2f7ed8"/>
<circle cx="203.51" cy="506.11" r="2.3" fill="#2f7ed8"/>
<circle cx="216.35" cy="520.77" r="2.3" fill="#2f7ed8"/>
<circle cx="229.18" cy="521.20" r="2.3" fill="#2f7ed8"/>
<circle cx="242.01" cy="518.07" r="2.3" fill="#2f7ed8"/>
<circle cx="254.84" cy="514.08" r="2.3" fill="#2f7ed8"/>
<circle cx="267.67" cy="513.44" r="2.3" fill="#2f7ed8"/>
<circle cx="280.51" cy="521.20" r="2.3" fill="#2f7ed8"/>
<circle cx="293.34" cy="506.11" r="2.3" fill="#2f7ed8"/>
<circle cx="306.17" cy="519.70" r="2.3" fill="#2f7ed8"/>
<circle cx="319.00" cy="516.57" r="2.3" fill="#2f7ed8"/>
<circle cx="331.84" cy="521.20" r="2.3" fill="#2f7ed8"/>
<circle cx="344.67" cy="513.65" r="2.3" fill="#2f7ed8"/>
<circle cx="357.50" cy="513.65" r="2.3" fill="#2f7ed8"/>
<circle cx="370.33" cy="521.20" r="2.3" fill="#2f7ed8"/>
<circle cx="383.16" cy="506.11" r="2.3" fill="#2f7ed8"/>
<circle cx="396.00" cy="521.20" r="2.3" fill="#2f7ed8"/>
<circle cx="408.83" cy="521.20" r="2.3" fill="#2f7ed8"/>
<circle cx="421.66" cy="521.20" r="2.3" fill="#2f7ed8"/>
<circle cx="434.49" cy="513.23" r="2.3" fill="#2f7ed8"/>
<circle cx="447.33" cy="512.80" r="2.3" fill="#2f7ed8"/>
<circle cx="460.16" cy="519.70" r="2.3" fill="#2f7ed8"/>
<circle cx="472.99" cy="505.25" r="2.3" fill="#2f7ed8"/>
<circle cx="485.82" cy="521.20" r="2.3" fill="#2f7ed8"/>
<circle cx="498.65" cy="521.20" r="2.3" fill="#2f7ed8"/>
<circle cx="511.49" cy="521.20" r="2.3" fill="#2f7ed8"/>
<circle cx="524.32" cy="512.80" r="2.3" fill="#2f7ed8"/>
<circle cx="537.15" cy="512.80" r="2.3" fill="#2f7ed8"/>
<circle cx="549.98" cy="521.20" r="2.3" fill="#2f7ed8"/>
<path d="M165.02 518.37 L167.42 520.77 L165.02 523.17 L162.62 520.77 Z" fill="#0d233a"/>
<path d="M177.85 518.80 L180.25 521.20 L177.85 523.60 L175.45 521.20 Z" fill="#0d233a"/>
<path d="M190.68 512.75 L193.08 515.15 L190.68 517.55 L188.28 515.15 Z" fill="#0d233a"/>
<path d="M203.51 512.75 L205.91 515.15 L203.51 517.55 L201.11 515.15 Z" fill="#0d233a"/>
<path d="M216.35 518.37 L218.75 520.77 L216.35 523.17 L213.95 520.77 Z" fill="#0d233a"/>
<path d="M229.18 511.68 L231.58 514.08 L229.18 516.48 L226.78 514.08 Z" fill="#0d233a"/>
<path d="M242.01 518.80 L244.41 521.20 L242.01 523.60 L239.61 521.20 Z" fill="#0d233a"/>
<path d="M254.84 516.31 L257.24 518.71 L254.84 521.11 L252.44 518.71 Z" fill="#0d233a"/>
<path d="M267.67 516.31 L270.07 518.71 L267.67 521.11 L265.27 518.71 Z" fill="#0d233a"/>
<path d="M280.51 513.18 L282.91 515.58 L280.51 517.98 L278.11 515.58 Z" fill="#0d233a"/>
<path d="M293.34 511.04 L295.74 513.44 L293.34 515.84 L290.94 513.44 Z" fill="#0d233a"/>
<path d="M306.17 517.95 L308.57 520.35 L306.17 522.75 L303.77 520.35 Z" fill="#0d233a"/>
<path d="M319.00 512.11 L321.40 514.51 L319.00 516.91 L316.60 514.51 Z" fill="#0d233a"/>
<path d="M331.84 518.80 L334.24 521.20 L331.84 523.60 L329.44 521.20 Z" fill="#0d233a"/>
<path d="M344.67 517.73 L347.07 520.13 L344.67 522.53 L342.27 520.13 Z" fill="#0d233a"/>
<path d="M357.50 518.80 L359.90 521.20 L357.50 523.60 L355.10 521.20 Z" fill="#0d233a"/>
<path d="M370.33 511.04 L372.73 513.44 L370.33 515.84 L367.93 513.44 Z" fill="#0d233a"/>
<path d="M383.16 512.11 L385.56 514.51 L383.16 516.91 L380.76 514.51 Z" fill="#0d233a"/>
<path d="M396.00 518.80 L398.40 521.20 L396.00 523.60 L393.60 521.20 Z" fill="#0d233a"/>
<path d="M408.83 511.47 L411.23 513.87 L408.83 516.27 L406.43 513.87 Z" fill="#0d233a"/>
<path d="M421.66 518.37 L424.06 520.77 L421.66 523.17 L419.26 520.77 Z" fill="#0d233a"/>
<path d="M434.49 517.30 L436.89 519.70 L434.49 522.10 L432.09 519.70 Z" fill="#0d233a"/>
<path d="M447.33 518.37 L449.73 520.77 L447.33 523.17 L444.93 520.77 Z" fill="#0d233a"/>
<path d="M460.16 511.04 L462.56 513.44 L460.16 515.84 L457.76 513.44 Z" fill="#0d233a"/>
<path d="M472.99 511.47 L475.39 513.87 L472.99 516.27 L470.59 513.87 Z" fill="#0d233a"/>
<path d="M485.82 517.95 L488.22 520.35 L485.82 522.75 L483.42 520.35 Z" fill="#0d233a"/>
<path d="M498.65 487.47 L501.05 489.87 L498.65 492.27 L496.25 489.87 Z" fill="#0d233a"/>
<path d="M511.49 518.80 L513.89 521.20 L511.49 523.60 L509.09 521.20 Z" fill="#0d233a"/>
<path d="M524.32 518.80 L526.72 521.20 L524.32 523.60 L521.92 521.20 Z" fill="#0d233a"/>
<path d="M537.15 517.73 L539.55 520.13 L537.15 522.53 L534.75 520.13 Z" fill="#0d233a"/>
<path d="M549.98 511.68 L552.38 514.08 L549.98 516.48 L547.58 514.08 Z" fill="#0d233a"/>
<text x="0" y="0" font-size="7.0" fill="#5a5a5a" text-anchor="end" transform="translate(172.52 546.90) rotate(-45)">17 Jun</text>
<text x="0" y="0" font-size="7.0" fill="#5a5a5a" text-anchor="end" transform="translate(198.18 546.90) rotate(-45)">19 Jun</text>
<text x="0" y="0" font-size="7.0" fill="#5a5a5a" text-anchor="end" transform="translate(223.85 546.90) rotate(-45)">21 Jun</text>
<text x="0" y="0" font-size="7.0" fill="#5a5a5a" text-anchor="end" transform="translate(249.51 546.90) rotate(-45)">23 Jun</text>
<text x="0" y="0" font-size="7.0" fill="#5a5a5a" text-anchor="end" transform="translate(275.17 546.90) rotate(-45)">25 Jun</text>
<text x="0" y="0" font-size="7.0" fill="#5a5a5a" text-anchor="end" transform="translate(300.84 546.90) rotate(-45)">27 Jun</text>
<text x="0" y="0" font-size="7.0" fill="#5a5a5a" text-anchor="end" transform="translate(326.50 546.90) rotate(-45)">29 Jun</text>
<text x="0" y="0" font-size="7.0" fill="#5a5a5a" text-anchor="end" transform="translate(352.17 546.90) rotate(-45)">01 Jul</text>
<text x="0" y="0" font-size="7.0" fill="#5a5a5a" text-anchor="end" transform="translate(377.83 546.90) rotate(-45)">03 Jul</text>
<text x="0" y="0" font-size="7.0" fill="#5a5a5a" text-anchor="end" transform="translate(403.50 546.90) rotate(-45)">05 Jul</text>
<text x="0" y="0" font-size="7.0" fill="#5a5a5a" text-anchor="end" transform="translate(429.16 546.90) rotate(-45)">07 Jul</text>
<text x="0" y="0" font-size="7.0" fill="#5a5a5a" text-anchor="end" transform="translate(454.83 546.90) rotate(-45)">09 Jul</text>
<text x="0" y="0" font-size="7.0" fill="#5a5a5a" text-anchor="end" transform="translate(480.49 546.90) rotate(-45)">11 Jul</text>
<text x="0" y="0" font-size="7.0" fill="#5a5a5a" text-anchor="end" transform="translate(506.15 546.90) rotate(-45)">13 Jul</text>
<text x="0" y="0" font-size="7.0" fill="#5a5a5a" text-anchor="end" transform="translate(531.82 546.90) rotate(-45)">15 Jul</text>
<text x="0" y="0" font-size="7.0" fill="#5a5a5a" text-anchor="end" transform="translate(557.48 546.90) rotate(-45)">17 Jul</text>
<rect x="281.4" y="563.2" width="132.6" height="14.2" rx="2.5" fill="#fff" stroke="#bdbdbd" stroke-width="0.8"/>
<rect x="285" y="569.6" width="9.5" height="1.3" fill="#2f7ed8"/><circle cx="289.75" cy="570.25" r="2" fill="#2f7ed8"/>
<text x="297.50" y="573.40" font-size="7.8" fill="#274b6d" font-weight="normal" text-anchor="start" textLength="46.3" lengthAdjust="spacingAndGlyphs" >Current Period</text>
<rect x="348.6" y="569.6" width="9.5" height="1.3" fill="#0d233a"/><path d="M353.35 568 L355.6 570.25 L353.35 572.5 L351.1 570.25 Z" fill="#0d233a"/>
<text x="361.20" y="573.40" font-size="7.8" fill="#274b6d" font-weight="normal" text-anchor="start" textLength="49" lengthAdjust="spacingAndGlyphs" >Previous Period</text>
<rect x="546" y="567.8" width="9.2" height="1.6" fill="#555"/>
<rect x="546" y="570.75" width="9.2" height="1.6" fill="#555"/>
<rect x="546" y="573.6999999999999" width="9.2" height="1.6" fill="#555"/>
<rect x="628.2" y="485.40" width="405.5" height="1" fill="#dedede"/>
<rect x="628.2" y="512.10" width="405.5" height="1" fill="#dedede"/>
<text x="623.40" y="488.90" font-size="6.4" fill="#5a5a5a" font-weight="normal" text-anchor="end" textLength="7.5" lengthAdjust="spacingAndGlyphs" >40</text>
<text x="623.40" y="515.60" font-size="6.4" fill="#5a5a5a" font-weight="normal" text-anchor="end" textLength="7.5" lengthAdjust="spacingAndGlyphs" >20</text>
<text x="623.40" y="542.30" font-size="6.4" fill="#5a5a5a" font-weight="normal" text-anchor="end" textLength="3.75" lengthAdjust="spacingAndGlyphs" >0</text>
<rect x="634.77" y="532.89" width="10.9" height="6.41" fill="#2f7ed8" stroke="#fff" stroke-width="1.4" paint-order="stroke"/>
<rect x="660.12" y="527.15" width="10.9" height="12.15" fill="#2f7ed8" stroke="#fff" stroke-width="1.4" paint-order="stroke"/>
<rect x="685.46" y="537.96" width="10.9" height="1.33" fill="#2f7ed8" stroke="#fff" stroke-width="1.4" paint-order="stroke"/>
<rect x="710.80" y="536.90" width="10.9" height="2.40" fill="#2f7ed8" stroke="#fff" stroke-width="1.4" paint-order="stroke"/>
<rect x="736.15" y="530.76" width="10.9" height="8.54" fill="#2f7ed8" stroke="#fff" stroke-width="1.4" paint-order="stroke"/>
<rect x="786.83" y="537.30" width="10.9" height="2.00" fill="#2f7ed8" stroke="#fff" stroke-width="1.4" paint-order="stroke"/>
<rect x="812.18" y="512.60" width="10.9" height="26.70" fill="#2f7ed8" stroke="#fff" stroke-width="1.4" paint-order="stroke"/>
<rect x="837.52" y="530.89" width="10.9" height="8.41" fill="#2f7ed8" stroke="#fff" stroke-width="1.4" paint-order="stroke"/>
<rect x="862.87" y="518.34" width="10.9" height="20.96" fill="#2f7ed8" stroke="#fff" stroke-width="1.4" paint-order="stroke"/>
<rect x="888.21" y="533.29" width="10.9" height="6.01" fill="#2f7ed8" stroke="#fff" stroke-width="1.4" paint-order="stroke"/>
<rect x="913.55" y="528.22" width="10.9" height="11.08" fill="#2f7ed8" stroke="#fff" stroke-width="1.4" paint-order="stroke"/>
<rect x="938.90" y="534.36" width="10.9" height="4.94" fill="#2f7ed8" stroke="#fff" stroke-width="1.4" paint-order="stroke"/>
<rect x="964.24" y="537.96" width="10.9" height="1.33" fill="#2f7ed8" stroke="#fff" stroke-width="1.4" paint-order="stroke"/>
<rect x="989.58" y="524.62" width="10.9" height="14.68" fill="#2f7ed8" stroke="#fff" stroke-width="1.4" paint-order="stroke"/>
<rect x="1014.93" y="536.76" width="10.9" height="2.54" fill="#2f7ed8" stroke="#fff" stroke-width="1.4" paint-order="stroke"/>
<rect x="628.2" y="538.80" width="405.5" height="1" fill="#c8d5e3"/>
<rect x="627.80" y="539.30" width="0.8" height="3" fill="#c8d5e3"/>
<rect x="653.14" y="539.30" width="0.8" height="3" fill="#c8d5e3"/>
<rect x="678.49" y="539.30" width="0.8" height="3" fill="#c8d5e3"/>
<rect x="703.83" y="539.30" width="0.8" height="3" fill="#c8d5e3"/>
<rect x="729.18" y="539.30" width="0.8" height="3" fill="#c8d5e3"/>
<rect x="754.52" y="539.30" width="0.8" height="3" fill="#c8d5e3"/>
<rect x="779.86" y="539.30" width="0.8" height="3" fill="#c8d5e3"/>
<rect x="805.21" y="539.30" width="0.8" height="3" fill="#c8d5e3"/>
<rect x="830.55" y="539.30" width="0.8" height="3" fill="#c8d5e3"/>
<rect x="855.89" y="539.30" width="0.8" height="3" fill="#c8d5e3"/>
<rect x="881.24" y="539.30" width="0.8" height="3" fill="#c8d5e3"/>
<rect x="906.58" y="539.30" width="0.8" height="3" fill="#c8d5e3"/>
<rect x="931.93" y="539.30" width="0.8" height="3" fill="#c8d5e3"/>
<rect x="957.27" y="539.30" width="0.8" height="3" fill="#c8d5e3"/>
<rect x="982.61" y="539.30" width="0.8" height="3" fill="#c8d5e3"/>
<rect x="1007.96" y="539.30" width="0.8" height="3" fill="#c8d5e3"/>
<rect x="1033.30" y="539.30" width="0.8" height="3" fill="#c8d5e3"/>
<text x="0" y="0" font-size="7.0" fill="#5a5a5a" text-anchor="end" transform="translate(647.57 547.60) rotate(-45)">12am</text>
<text x="0" y="0" font-size="7.0" fill="#5a5a5a" text-anchor="end" transform="translate(672.92 547.60) rotate(-45)">2am</text>
<text x="0" y="0" font-size="7.0" fill="#5a5a5a" text-anchor="end" transform="translate(698.26 547.60) rotate(-45)">3am</text>
<text x="0" y="0" font-size="7.0" fill="#5a5a5a" text-anchor="end" transform="translate(723.60 547.60) rotate(-45)">4am</text>
<text x="0" y="0" font-size="7.0" fill="#5a5a5a" text-anchor="end" transform="translate(748.95 547.60) rotate(-45)">6am</text>
<text x="0" y="0" font-size="7.0" fill="#5a5a5a" text-anchor="end" transform="translate(774.29 547.60) rotate(-45)">7am</text>
<text x="0" y="0" font-size="7.0" fill="#5a5a5a" text-anchor="end" transform="translate(799.63 547.60) rotate(-45)">8am</text>
<text x="0" y="0" font-size="7.0" fill="#5a5a5a" text-anchor="end" transform="translate(824.98 547.60) rotate(-45)">10am</text>
<text x="0" y="0" font-size="7.0" fill="#5a5a5a" text-anchor="end" transform="translate(850.32 547.60) rotate(-45)">12pm</text>
<text x="0" y="0" font-size="7.0" fill="#5a5a5a" text-anchor="end" transform="translate(875.67 547.60) rotate(-45)">2pm</text>
<text x="0" y="0" font-size="7.0" fill="#5a5a5a" text-anchor="end" transform="translate(901.01 547.60) rotate(-45)">4pm</text>
<text x="0" y="0" font-size="7.0" fill="#5a5a5a" text-anchor="end" transform="translate(926.35 547.60) rotate(-45)">6pm</text>
<text x="0" y="0" font-size="7.0" fill="#5a5a5a" text-anchor="end" transform="translate(951.70 547.60) rotate(-45)">7pm</text>
<text x="0" y="0" font-size="7.0" fill="#5a5a5a" text-anchor="end" transform="translate(977.04 547.60) rotate(-45)">8pm</text>
<text x="0" y="0" font-size="7.0" fill="#5a5a5a" text-anchor="end" transform="translate(1002.38 547.60) rotate(-45)">10pm</text>
<text x="0" y="0" font-size="7.0" fill="#5a5a5a" text-anchor="end" transform="translate(1027.73 547.60) rotate(-45)">11pm</text>
<rect x="771.3" y="563" width="107" height="14.4" rx="2.5" fill="#fff" stroke="#bdbdbd" stroke-width="0.8"/>
<rect x="775.6" y="566.8" width="8.3" height="5.6" rx="0.8" fill="#2f7ed8"/>
<text x="787.40" y="573.20" font-size="7.8" fill="#274b6d" font-weight="normal" text-anchor="start" textLength="87" lengthAdjust="spacingAndGlyphs" >Engagement Probability (%)</text>
<rect x="1022.9" y="567.6" width="9.2" height="1.6" fill="#555"/>
<rect x="1022.9" y="570.5500000000001" width="9.2" height="1.6" fill="#555"/>
<rect x="1022.9" y="573.5" width="9.2" height="1.6" fill="#555"/>
</svg></body></html>
